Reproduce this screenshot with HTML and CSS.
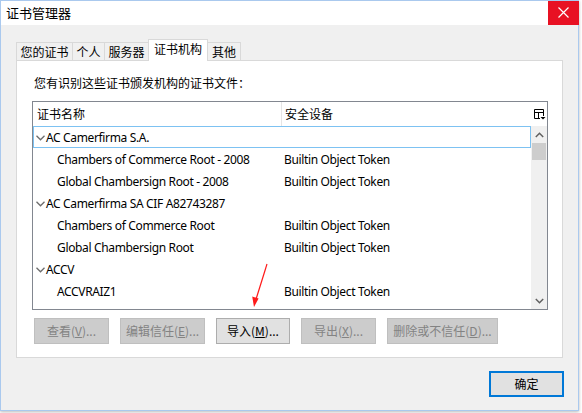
FILE: index.html
```html
<!DOCTYPE html>
<html lang="zh-CN">
<head>
<meta charset="utf-8">
<title>证书管理器</title>
<link rel="stylesheet" href="styles.css">
</head>
<body>
<div class="window">
  <div class="titlebar">
    <span class="title">证书管理器</span>
    <div class="close">
      <svg width="11" height="11" viewBox="0 0 11 11"><path d="M0.5 0.5L10.5 10.5M10.5 0.5L0.5 10.5" stroke="#fff" stroke-width="1.2" fill="none"/></svg>
    </div>
  </div>
  <div class="content">
    <div class="tabs">
      <div class="tab w57">您的证书</div>
      <div class="tab w33">个人</div>
      <div class="tab w45">服务器</div>
      <div class="tab active">证书机构</div>
      <div class="tab w34">其他</div>
    </div>
    <div class="panel">
      <p class="intro">您有识别这些证书颁发机构的证书文件：</p>
      <div class="tree">
        <div class="tree-main">
          <div class="thead">
            <div class="th th-name">证书名称</div>
            <div class="th th-dev">安全设备</div>
          </div>
          <div class="rows">
            <div class="row group focus"><span class="chev"><svg width="9" height="6" viewBox="0 0 9 6"><path d="M0.5 0.8L4.5 4.8L8.5 0.8" stroke="#6d6d6d" stroke-width="1.3" fill="none"/></svg></span><span class="name">AC Camerfirma S.A.</span></div>
            <div class="row"><span class="cell-name child">Chambers of Commerce Root - 2008</span><span class="cell-dev">Builtin Object Token</span></div>
            <div class="row"><span class="cell-name child">Global Chambersign Root - 2008</span><span class="cell-dev">Builtin Object Token</span></div>
            <div class="row group"><span class="chev"><svg width="9" height="6" viewBox="0 0 9 6"><path d="M0.5 0.8L4.5 4.8L8.5 0.8" stroke="#6d6d6d" stroke-width="1.3" fill="none"/></svg></span><span class="name">AC Camerfirma SA CIF A82743287</span></div>
            <div class="row"><span class="cell-name child">Chambers of Commerce Root</span><span class="cell-dev">Builtin Object Token</span></div>
            <div class="row"><span class="cell-name child">Global Chambersign Root</span><span class="cell-dev">Builtin Object Token</span></div>
            <div class="row group"><span class="chev"><svg width="9" height="6" viewBox="0 0 9 6"><path d="M0.5 0.8L4.5 4.8L8.5 0.8" stroke="#6d6d6d" stroke-width="1.3" fill="none"/></svg></span><span class="name">ACCV</span></div>
            <div class="row"><span class="cell-name child">ACCVRAIZ1</span><span class="cell-dev">Builtin Object Token</span></div>
            <div class="row"><span class="cell-name child"></span><span class="cell-dev"></span></div>
          </div>
        </div>
        <div class="side">
          <div class="picker">
            <svg width="13" height="13" viewBox="0 0 13 13"><path d="M1.5 1.5H10.5V8M1.5 1.5V10.5H7M1.5 4.5H10.5M5.5 4.5V10.5" stroke="#000" stroke-width="1" fill="none"/><path d="M7.5 9H12.5L10 11.5Z" fill="#000"/></svg>
          </div>
          <div class="vscroll">
            <div class="arrow-btn"><svg width="9" height="6" viewBox="0 0 9 6"><path d="M0.8 5L4.5 1.3L8.2 5" stroke="#606060" stroke-width="1.5" fill="none"/></svg></div>
            <div class="thumb"></div>
            <div class="track"></div>
            <div class="arrow-btn"><svg width="9" height="6" viewBox="0 0 9 6"><path d="M0.8 1L4.5 4.7L8.2 1" stroke="#606060" stroke-width="1.5" fill="none"/></svg></div>
          </div>
        </div>
      </div>
      <div class="btnrow">
        <button class="btn disabled b75">查看(<u>V</u>)...</button>
        <button class="btn disabled b85">编辑信任(<u>E</u>)...</button>
        <button class="btn b74">导入(<u>M</u>)...</button>
        <button class="btn disabled b75">导出(<u>X</u>)...</button>
        <button class="btn disabled b111">删除或不信任(<u>D</u>)...</button>
      </div>
    </div>
    <div class="footer">
      <button class="btn ok">确定</button>
    </div>
  </div>
  <svg class="annot" width="40" height="60" viewBox="0 0 40 60">
    <path d="M28 1L16.5 38" stroke="#ff1a1a" stroke-width="1.2" fill="none"/>
    <path d="M15 44L13.2 33.5L19.6 35.4Z" fill="#ff1a1a"/>
  </svg>
</div>
</body>
</html>
```

FILE: styles.css
```css
* { box-sizing: border-box; }
html, body { margin: 0; padding: 0; }
body {
  background: #ffffff;
  width: 582px;
  height: 413px;
  overflow: hidden;
  font-family: "Noto Sans", "Noto Sans CJK SC", sans-serif;
  font-size: 12px;
  color: #000;
}
.window {
  position: relative;
  width: 579px;
  height: 411px;
  border: 1px solid #aac9ee;
  background: #f0f0f0;
  box-shadow: 0 1px 3px rgba(0,0,0,0.28);
  display: flex;
  flex-direction: column;
}
.titlebar {
  height: 24px;
  background: #fff;
  display: flex;
  align-items: center;
  justify-content: space-between;
  flex: none;
}
.title {
  padding-left: 5px;
  font-size: 13px;
  font-family: "Noto Sans CJK SC", sans-serif;
  line-height: 24px;
}
.close {
  width: 31px;
  height: 24px;
  margin-right: -1px;
  margin-top: -1px;
  background: #e81123;
  display: flex;
  align-items: center;
  justify-content: center;
}
.content {
  flex: 1;
  padding: 14px 15px 0 15px;
  display: flex;
  flex-direction: column;
}
.tabs {
  display: flex;
  align-items: flex-end;
  height: 21px;
  position: relative;
  z-index: 2;
}
.tab {
  height: 18px;
  border: 1px solid #d9d9d9;
  border-bottom: none;
  background: #f0f0f0;
  margin-right: -1px;
  display: flex;
  align-items: center;
  justify-content: center;
  font-family: "Noto Sans CJK SC", sans-serif;
  font-size: 12px;
  line-height: 16px;
}
.tab.w57 { width: 57px; }
.tab.w33 { width: 33px; }
.tab.w45 { width: 45px; }
.tab.w34 { width: 34px; }
.tab.active {
  width: 60px;
  height: 22px;
  margin-bottom: -1px;
  background: #fff;
  padding-bottom: 3px;
  position: relative;
  z-index: 3;
}
.panel {
  height: 298px;
  border: 1px solid #d9d9d9;
  background: #fff;
  padding: 14px 14px 13px 15px;
  display: flex;
  flex-direction: column;
  position: relative;
  z-index: 1;
}
.intro {
  margin: 0 0 10px 2px;
  height: 16px;
  line-height: 16px;
  font-family: "Noto Sans CJK SC", sans-serif;
}
.tree {
  height: 209px;
  border: 1px solid #828790;
  display: flex;
  overflow: hidden;
}
.tree-main {
  flex: 1;
  display: flex;
  flex-direction: column;
  overflow: hidden;
}
.thead {
  height: 24px;
  display: flex;
  flex: none;
}
.th {
  line-height: 24px;
  font-family: "Noto Sans CJK SC", sans-serif;
}
.th-name {
  width: 249px;
  padding-left: 4px;
  border-right: 1px solid #e5e5e5;
}
.th-dev {
  padding-left: 3px;
}
.rows {
  flex: 1;
  overflow: hidden;
}
.row {
  height: 22px;
  padding-top: 2px;
  display: flex;
  align-items: center;
  white-space: nowrap;
  line-height: 20px;
  letter-spacing: -0.35px;
}
.row.focus {
  outline: 1px solid #7dc2f2;
  outline-offset: -1px;
}
.chev {
  width: 13px;
  padding-left: 3px;
  display: flex;
  align-items: center;
  margin-top: -1px;
}
.cell-name {
  width: 251px;
  flex: none;
}
.cell-name.child { padding-left: 24px; }
.side {
  width: 16px;
  flex: none;
  display: flex;
  flex-direction: column;
}
.picker {
  height: 24px;
  display: flex;
  align-items: center;
  justify-content: center;
  background: #fff;
}
.vscroll {
  flex: 1;
  background: #f0f0f0;
  display: flex;
  flex-direction: column;
}
.arrow-btn {
  height: 17px;
  display: flex;
  align-items: center;
  justify-content: center;
}
.thumb {
  height: 17px;
  margin: 0 1px;
  background: #cdcdcd;
}
.track { flex: 1; }
.btnrow {
  margin-top: 8px;
  padding-left: 2px;
  display: flex;
  gap: 11px;
}
.btn {
  height: 26px;
  border: 1px solid #adadad;
  background: #e1e1e1;
  font-family: "Noto Sans CJK SC", sans-serif;
  font-size: 12px;
  color: #000;
  padding: 0;
  line-height: 22px;
  text-align: center;
}
.btn.disabled {
  background: #cccccc;
  border-color: #bfbfbf;
  color: #838383;
}
.b75 { width: 75px; }
.b85 { width: 85px; }
.b74 { width: 74px; }
.b111 { width: 111px; }
.footer {
  display: flex;
  justify-content: flex-end;
  margin-top: 13px;
  margin-right: -1px;
}
.btn.ok {
  width: 75px;
  height: 26px;
  border: 2px solid #0078d7;
}
.annot {
  position: absolute;
  left: 238px;
  top: 262px;
  z-index: 10;
}
```
